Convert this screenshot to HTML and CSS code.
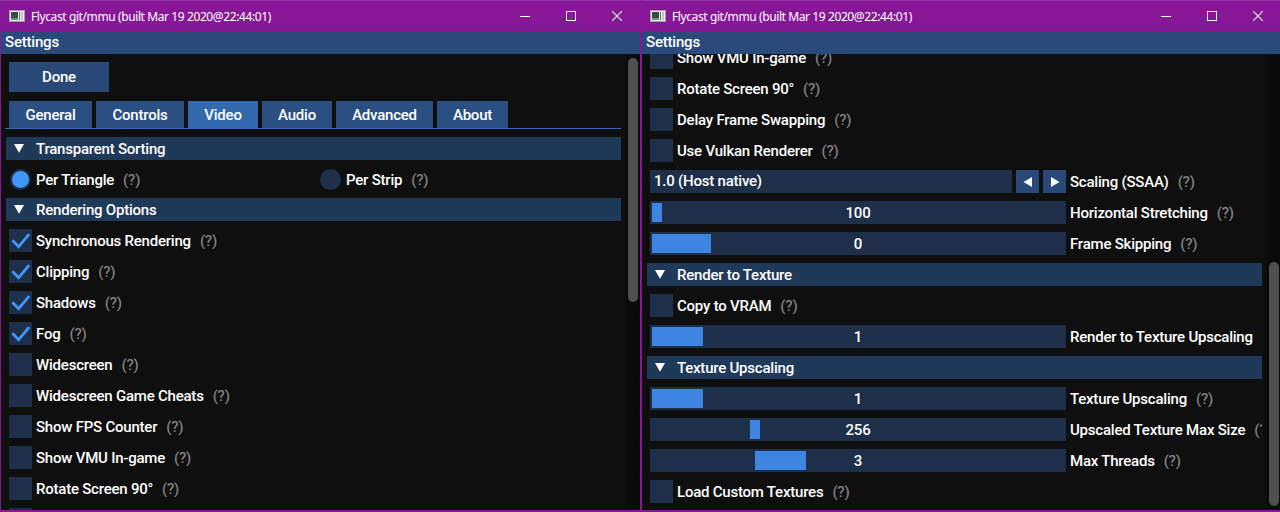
FILE: index.html
```html
<!DOCTYPE html>
<html>
<head>
<meta charset="utf-8">
<link rel="stylesheet" href="styles.css">
</head>
<body>
<div class="desktop">

  <!-- LEFT WINDOW -->
  <div class="win">
    <div class="titlebar">
      <svg class="appicon" width="16" height="12" viewBox="0 0 16 12"><rect x="0.5" y="0.5" width="15" height="11" fill="#ececec" stroke="#a0a0a0"/><rect x="2" y="2" width="7" height="8" fill="#3b4848"/><rect x="2" y="8" width="7" height="2" fill="#5f9a70"/><rect x="10" y="2" width="1" height="8" fill="#6f6f6f"/><rect x="12" y="2" width="2" height="8" fill="#c4c4c4"/></svg>
      <span class="wtitle">Flycast git/mmu (built Mar 19 2020@22:44:01)</span>
      <div class="wctrls">
        <div class="wbtn"><svg width="10" height="10" viewBox="0 0 10 10"><line x1="0" y1="5.5" x2="10" y2="5.5" stroke="#fff" stroke-width="1"/></svg></div>
        <div class="wbtn"><svg width="10" height="10" viewBox="0 0 10 10"><rect x="0.5" y="0.5" width="9" height="9" fill="none" stroke="#fff" stroke-width="1"/></svg></div>
        <div class="wbtn"><svg width="10" height="10" viewBox="0 0 10 10"><path d="M0 0L10 10M10 0L0 10" stroke="#fff" stroke-width="1.1"/></svg></div>
      </div>
    </div>
    <div class="client">
      <div class="imtitle">Settings</div>
      <div class="imbody">
        <div class="clip">
          <div class="content">
            <div class="btn done">Done</div>
            <div class="tabbar">
              <div class="tab t-general">General</div>
              <div class="tab t-controls">Controls</div>
              <div class="tab t-video active">Video</div>
              <div class="tab t-audio">Audio</div>
              <div class="tab t-advanced">Advanced</div>
              <div class="tab t-about">About</div>
            </div>
            <div class="header"><svg class="tri" width="10" height="9" viewBox="0 0 10 9"><polygon points="0,0 10,0 5,8.7" fill="#fff"/></svg>Transparent Sorting</div>
            <div class="radiorow">
              <div class="ritem"><div class="radio"><div class="dot on"></div></div><span class="lbl">Per Triangle</span><span class="help">(?)</span></div>
              <div class="ritem"><div class="radio"><div class="dot"></div></div><span class="lbl">Per Strip</span><span class="help">(?)</span></div>
            </div>
            <div class="header"><svg class="tri" width="10" height="9" viewBox="0 0 10 9"><polygon points="0,0 10,0 5,8.7" fill="#fff"/></svg>Rendering Options</div>
            <div class="row"><div class="box"><svg width="23" height="23" viewBox="0 0 23 23"><polyline points="3.4,11.2 9.6,17.6 20.2,5.2" fill="none" stroke="#4296fa" stroke-width="2.8"/></svg></div><span class="lbl">Synchronous Rendering</span><span class="help">(?)</span></div>
            <div class="row"><div class="box"><svg width="23" height="23" viewBox="0 0 23 23"><polyline points="3.4,11.2 9.6,17.6 20.2,5.2" fill="none" stroke="#4296fa" stroke-width="2.8"/></svg></div><span class="lbl">Clipping</span><span class="help">(?)</span></div>
            <div class="row"><div class="box"><svg width="23" height="23" viewBox="0 0 23 23"><polyline points="3.4,11.2 9.6,17.6 20.2,5.2" fill="none" stroke="#4296fa" stroke-width="2.8"/></svg></div><span class="lbl">Shadows</span><span class="help">(?)</span></div>
            <div class="row"><div class="box"><svg width="23" height="23" viewBox="0 0 23 23"><polyline points="3.4,11.2 9.6,17.6 20.2,5.2" fill="none" stroke="#4296fa" stroke-width="2.8"/></svg></div><span class="lbl">Fog</span><span class="help">(?)</span></div>
            <div class="row"><div class="box"></div><span class="lbl">Widescreen</span><span class="help">(?)</span></div>
            <div class="row"><div class="box"></div><span class="lbl">Widescreen Game Cheats</span><span class="help">(?)</span></div>
            <div class="row"><div class="box"></div><span class="lbl">Show FPS Counter</span><span class="help">(?)</span></div>
            <div class="row"><div class="box"></div><span class="lbl">Show VMU In-game</span><span class="help">(?)</span></div>
            <div class="row"><div class="box"></div><span class="lbl">Rotate Screen 90°</span><span class="help">(?)</span></div>
            <div class="row"><div class="box"></div><span class="lbl">Delay Frame Swapping</span><span class="help">(?)</span></div>
          </div>
        </div>
        <div class="scrollbar"><div class="grab"></div></div>
      </div>
    </div>
  </div>

  <!-- RIGHT WINDOW -->
  <div class="win">
    <div class="titlebar">
      <svg class="appicon" width="16" height="12" viewBox="0 0 16 12"><rect x="0.5" y="0.5" width="15" height="11" fill="#ececec" stroke="#a0a0a0"/><rect x="2" y="2" width="7" height="8" fill="#3b4848"/><rect x="2" y="8" width="7" height="2" fill="#5f9a70"/><rect x="10" y="2" width="1" height="8" fill="#6f6f6f"/><rect x="12" y="2" width="2" height="8" fill="#c4c4c4"/></svg>
      <span class="wtitle">Flycast git/mmu (built Mar 19 2020@22:44:01)</span>
      <div class="wctrls">
        <div class="wbtn"><svg width="10" height="10" viewBox="0 0 10 10"><line x1="0" y1="5.5" x2="10" y2="5.5" stroke="#fff" stroke-width="1"/></svg></div>
        <div class="wbtn"><svg width="10" height="10" viewBox="0 0 10 10"><rect x="0.5" y="0.5" width="9" height="9" fill="none" stroke="#fff" stroke-width="1"/></svg></div>
        <div class="wbtn"><svg width="10" height="10" viewBox="0 0 10 10"><path d="M0 0L10 10M10 0L0 10" stroke="#fff" stroke-width="1.1"/></svg></div>
      </div>
    </div>
    <div class="client">
      <div class="imtitle">Settings</div>
      <div class="imbody">
        <div class="clip">
          <div class="content scrolled">
            <div class="row"><div class="box"></div><span class="lbl">Show VMU In-game</span><span class="help">(?)</span></div>
            <div class="row"><div class="box"></div><span class="lbl">Rotate Screen 90°</span><span class="help">(?)</span></div>
            <div class="row"><div class="box"></div><span class="lbl">Delay Frame Swapping</span><span class="help">(?)</span></div>
            <div class="row"><div class="box"></div><span class="lbl">Use Vulkan Renderer</span><span class="help">(?)</span></div>
            <div class="row">
              <div class="combo">1.0 (Host native)</div>
              <div class="abtn"><svg width="10" height="10" viewBox="0 0 10 10"><polygon points="9,0 9,10 0.5,5" fill="#fff"/></svg></div>
              <div class="abtn"><svg width="10" height="10" viewBox="0 0 10 10"><polygon points="1,0 1,10 9.5,5" fill="#fff"/></svg></div>
              <span class="lbl">Scaling (SSAA)</span><span class="help">(?)</span>
            </div>
            <div class="row"><div class="slider"><div class="sgrab" style="left:2px;width:10px"></div><span class="sval">100</span></div><span class="lbl">Horizontal Stretching</span><span class="help">(?)</span></div>
            <div class="row"><div class="slider"><div class="sgrab" style="left:2px;width:59px"></div><span class="sval">0</span></div><span class="lbl">Frame Skipping</span><span class="help">(?)</span></div>
            <div class="header"><svg class="tri" width="10" height="9" viewBox="0 0 10 9"><polygon points="0,0 10,0 5,8.7" fill="#fff"/></svg>Render to Texture</div>
            <div class="row"><div class="box"></div><span class="lbl">Copy to VRAM</span><span class="help">(?)</span></div>
            <div class="row"><div class="slider"><div class="sgrab" style="left:2px;width:51px"></div><span class="sval">1</span></div><span class="lbl">Render to Texture Upscaling</span><span class="help">(?)</span></div>
            <div class="header"><svg class="tri" width="10" height="9" viewBox="0 0 10 9"><polygon points="0,0 10,0 5,8.7" fill="#fff"/></svg>Texture Upscaling</div>
            <div class="row"><div class="slider"><div class="sgrab" style="left:2px;width:51px"></div><span class="sval">1</span></div><span class="lbl">Texture Upscaling</span><span class="help">(?)</span></div>
            <div class="row"><div class="slider"><div class="sgrab" style="left:100px;width:10px"></div><span class="sval">256</span></div><span class="lbl">Upscaled Texture Max Size</span><span class="help">(?)</span></div>
            <div class="row"><div class="slider"><div class="sgrab" style="left:105px;width:51px"></div><span class="sval">3</span></div><span class="lbl">Max Threads</span><span class="help">(?)</span></div>
            <div class="row"><div class="box"></div><span class="lbl">Load Custom Textures</span><span class="help">(?)</span></div>
          </div>
        </div>
        <div class="scrollbar low"><div class="grab"></div></div>
      </div>
    </div>
  </div>

</div>
</body>
</html>
```
FILE: styles.css
```css
html, body {
  margin: 0;
  padding: 0;
}
body {
  width: 1280px;
  height: 512px;
  overflow: hidden;
  background: #881798;
  font-family: Roboto, "Noto Sans", sans-serif;
  color: #ffffff;
}
.desktop {
  display: flex;
  width: 1282px;
  height: 512px;
}
.win {
  flex: none;
  width: 641px;
  height: 512px;
  box-sizing: border-box;
  border: 1px solid #881798;
  border-top-color: #9636a6;
  border-bottom-width: 2px;
  display: flex;
  flex-direction: column;
  background: #0f0f0f;
}
.titlebar {
  flex: none;
  height: 30px;
  background: #881798;
  display: flex;
  align-items: center;
}
.appicon {
  margin-left: 8px;
  flex: none;
}
.wtitle {
  margin-left: 6px;
  font-family: "Noto Sans", "Open Sans", sans-serif;
  font-size: 12px;
  letter-spacing: -0.4px;
  color: #ffffff;
  white-space: nowrap;
}
.wctrls {
  margin-left: auto;
  display: flex;
  height: 30px;
}
.wbtn {
  width: 46px;
  height: 30px;
  display: flex;
  align-items: center;
  justify-content: center;
}
.client {
  flex: 1;
  display: flex;
  flex-direction: column;
  min-height: 0;
}
.imtitle {
  flex: none;
  height: 23px;
  line-height: 23px;
  background: #294a7a;
  padding-left: 4px;
  font-size: 15px;
  font-weight: 500;
  letter-spacing: -0.2px;
}
.imbody {
  flex: 1;
  display: flex;
  min-height: 0;
  overflow: hidden;
}
.clip {
  flex: 1;
  overflow: hidden;
  margin: 0 5px 0 4px;
  min-width: 0;
}
.content {
  padding: 8px 3px 0 4px;
  display: flex;
  flex-direction: column;
  gap: 8px;
  font-size: 15px;
  font-weight: 500;
  letter-spacing: -0.22px;
}
.content.scrolled {
  padding-top: 0;
  margin-top: -8px;
}
.scrollbar {
  flex: none;
  width: 14px;
  background: #0a0a0a;
  box-sizing: border-box;
  padding: 4px 2px 0;
}
.scrollbar.low {
  padding-top: 208px;
}
.grab {
  width: 10px;
  height: 244px;
  border-radius: 5px;
  background: #4f4f4f;
}
.btn {
  background: #284978;
  display: flex;
  align-items: center;
  justify-content: center;
}
.done {
  width: 100px;
  height: 30px;
  flex: none;
}
.tabbar {
  flex: none;
  margin: 1px -4px 0;
  padding: 0 4px;
  display: flex;
  gap: 4px;
  height: 27px;
  border-bottom: 1px solid #3369ad;
}
.tab {
  height: 27px;
  display: flex;
  align-items: center;
  justify-content: center;
  background: #2a4f82;
}
.tab.active { background: #3369ad; }
.t-general { width: 83px; }
.t-controls { width: 88px; }
.t-video { width: 70px; }
.t-audio { width: 70px; }
.t-advanced { width: 97px; }
.t-about { width: 71px; }
.header {
  flex: none;
  height: 23px;
  margin: 0 -3px;
  background: #1f3958;
  display: flex;
  align-items: center;
  padding-left: 8px;
  white-space: nowrap;
}
.tri {
  margin-right: 12px;
  flex: none;
}
.row {
  flex: none;
  height: 23px;
  display: flex;
  align-items: center;
  white-space: nowrap;
}
.box {
  flex: none;
  width: 23px;
  height: 23px;
  background: #1d2f49;
}
.box svg { display: block; }
.lbl {
  margin-left: 4px;
}
.help {
  margin-left: 9px;
  color: #808080;
}
.radiorow {
  flex: none;
  height: 22px;
  display: grid;
  grid-template-columns: 310px 1fr;
  align-items: center;
}
.ritem {
  display: flex;
  align-items: center;
  white-space: nowrap;
}
.radio {
  width: 23px;
  height: 23px;
  flex: none;
  display: flex;
  align-items: center;
  justify-content: center;
}
.dot {
  width: 21px;
  height: 21px;
  border-radius: 50%;
  background: #1d2f49;
  box-sizing: border-box;
}
.dot.on {
  background: #4296fa;
  border: 2.5px solid #1d2f49;
}
.combo {
  flex: none;
  width: 362px;
  height: 23px;
  box-sizing: border-box;
  padding-left: 4px;
  line-height: 23px;
  background: #1d2f49;
}
.abtn {
  flex: none;
  width: 23px;
  height: 23px;
  margin-left: 4px;
  background: #284978;
  display: flex;
  align-items: center;
  justify-content: center;
}
.slider {
  flex: none;
  position: relative;
  width: 416px;
  height: 23px;
  background: #1d2f49;
  display: flex;
  align-items: center;
  justify-content: center;
}
.sgrab {
  position: absolute;
  top: 2px;
  bottom: 2px;
  background: #3d85e0;
}
.sval {
  position: relative;
}
```
